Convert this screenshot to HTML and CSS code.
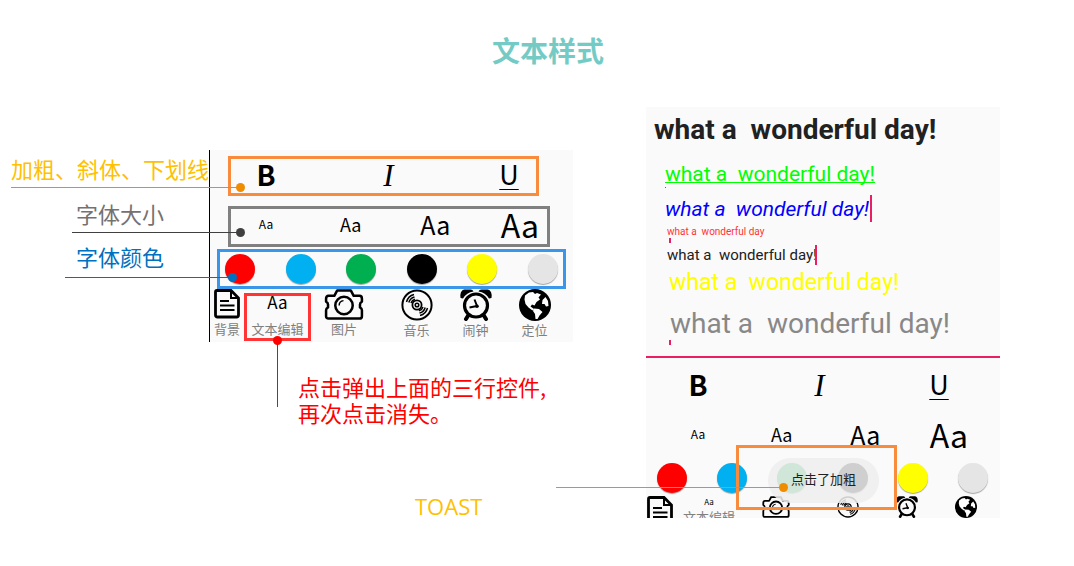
FILE: index.html
```html
<!DOCTYPE html>
<html lang="zh-CN">
<head>
<meta charset="utf-8">
<meta name="viewport" content="width=device-width, initial-scale=1">
<title>文本样式</title>
<link rel="stylesheet" href="styles.css">
</head>
<body>
<svg class="sprite" aria-hidden="true">
  <symbol id="doc" viewBox="0 0 26 30">
    <path d="M3 1.500H17L24.500 9V26Q24.500 28 22.500 28H3.500Q1.500 28 1.500 26V3Q1.500 1.500 3 1.500Z" fill="none" stroke="#000" stroke-width="2.800"/>
    <path d="M17 2V9H24" fill="none" stroke="#000" stroke-width="2"/>
    <path d="M6 12H15M6 16.500H20.500M6 21H20.500" stroke="#000" stroke-width="2"/>
  </symbol>
  <symbol id="camera" viewBox="0 0 40 32">
    <path d="M4 7H10L13 1.500H27L30 7H36Q38.500 7 38.500 10V13Q36.500 14 36.500 16V19Q38.500 20 38.500 22V28Q38.500 30.500 36 30.500H4Q1.500 30.500 1.500 28V22Q1.500 20 3.500 19V16Q3.500 14 1.500 13V10Q1.500 7 4 7Z" fill="none" stroke="#000" stroke-width="2.600" stroke-linejoin="round"/>
    <circle cx="20" cy="17" r="9" fill="none" stroke="#000" stroke-width="2.600"/>
    <path d="M15 17Q15 12.500 19.500 12" fill="none" stroke="#000" stroke-width="1.500"/>
  </symbol>
  <symbol id="disc" viewBox="0 0 32 32">
    <g fill="none" stroke="#000">
      <circle cx="16" cy="16" r="14.600" stroke-width="2"/>
      <circle cx="16" cy="16" r="4.600" stroke-width="1.800"/>
      <circle cx="16" cy="16" r="1.800" stroke-width="1.500"/>
      <path d="M5.500 13Q7 7 13 5.500M7.800 13.500Q9 9 13.500 7.900M10 14Q11 11 14 10.200M26.500 19Q25 25 19 26.500M24.200 18.500Q23 23 18.500 24.100M22 18Q21 21 18 21.800" stroke-width="1.500"/>
    </g>
  </symbol>
  <symbol id="clock" viewBox="0 0 32 32">
    <path d="M.5 9Q-.5 2 4 .5H11Q13 1 13.500 2.500Q6.500 3.500 3 9.500ZM31.500 9Q32.500 2 28 .5H21Q19 1 18.500 2.500Q25.500 3.500 29 9.500Z"/>
    <circle cx="16" cy="16.500" r="11.500" fill="none" stroke="#000" stroke-width="3.200"/>
    <path d="M8.500 26L6 30M23.500 26L26 30" stroke="#000" stroke-width="4" stroke-linecap="round"/>
    <path d="M14.500 10.500L17 17L9.500 18.500" fill="none" stroke="#000" stroke-width="2"/>
    <circle cx="17" cy="17.300" r="1.800"/>
  </symbol>
  <symbol id="globe" viewBox="0 0 32 32">
    <circle cx="16" cy="16" r="16"/>
    <path d="M6 6.500L10 3.500L14 3L16 5L18 4L22 5.500L19.500 8.500L21 10.500L17.500 13L15.500 16.500L13 15.500L11.500 17.500L15 20L13.500 21.500L9.500 18.500L6.500 15L5.500 10.500ZM15 19.500L20 20L23.500 23L20.500 26.500L18.500 30L16.500 30L16 25L14 22ZM23.500 11L26.500 8L29 12L29.500 17L27 17.500L25.500 15L23 15Z" fill="#fff"/>
  </symbol>
</svg>

<header class="header"><h1 class="title">文本样式</h1></header>

<main class="board">
  <ul class="labels">
    <li class="label label-style">加粗、斜体、下划线</li>
    <li class="label label-size">字体大小</li>
    <li class="label label-color">字体颜色</li>
  </ul>

  <section class="middle">
    <div class="panel">
      <div class="row frame frame-style">
        <button class="tool bold">B</button>
        <button class="tool italic">I</button>
        <button class="tool underline">U</button>
      </div>
      <div class="row frame frame-size">
        <button class="tool size-s">Aa</button>
        <button class="tool size-m">Aa</button>
        <button class="tool size-l">Aa</button>
        <button class="tool size-xl">Aa</button>
      </div>
      <div class="row frame frame-color">
        <button class="swatch red" aria-label="红色"></button>
        <button class="swatch blue" aria-label="蓝色"></button>
        <button class="swatch green" aria-label="绿色"></button>
        <button class="swatch black" aria-label="黑色"></button>
        <button class="swatch yellow" aria-label="黄色"></button>
        <button class="swatch gray" aria-label="灰色"></button>
      </div>
      <nav class="tabs">
        <button class="tab tab-doc"><svg class="icon-doc"><use href="#doc"/></svg>背景</button>
        <button class="tab tab-text"><span class="text-icon">Aa</span>文本编辑</button>
        <button class="tab tab-camera"><svg class="icon-camera"><use href="#camera"/></svg>图片</button>
        <button class="tab tab-plain"><svg class="icon-round"><use href="#disc"/></svg>音乐</button>
        <button class="tab tab-plain"><svg class="icon-round"><use href="#clock"/></svg>闹钟</button>
        <button class="tab tab-plain"><svg class="icon-round"><use href="#globe"/></svg>定位</button>
      </nav>
    </div>
    <p class="note">点击弹出上面的三行控件,<br>再次点击消失。</p>
    <p class="toast-label">TOAST</p>
  </section>

  <section class="phone">
    <div class="editor">
      <p class="line line-bold">what a  wonderful day!</p>
      <p class="line line-green">what a  wonderful day!</p>
      <p class="line line-blue">what a  wonderful day!</p>
      <p class="line line-red">what a  wonderful day</p>
      <p class="line line-black">what a  wonderful day!</p>
      <p class="line line-yellow">what a  wonderful day!</p>
      <p class="line line-gray">what a  wonderful day!</p>
    </div>
    <div class="row phone-style">
      <button class="tool bold">B</button>
      <button class="tool italic">I</button>
      <button class="tool underline">U</button>
    </div>
    <div class="row phone-size">
      <button class="tool size-s">Aa</button>
      <button class="tool size-m">Aa</button>
      <button class="tool size-l">Aa</button>
      <button class="tool size-xl">Aa</button>
    </div>
    <div class="row phone-color">
      <button class="swatch red" aria-label="红色"></button>
      <button class="swatch blue" aria-label="蓝色"></button>
      <button class="swatch green" aria-label="绿色"></button>
      <button class="swatch black" aria-label="黑色"></button>
      <button class="swatch yellow" aria-label="黄色"></button>
      <button class="swatch gray" aria-label="灰色"></button>
    </div>
    <nav class="phone-tabs">
      <button class="tab" aria-label="背景"><svg class="icon-doc"><use href="#doc"/></svg></button>
      <button class="tab phone-text"><span class="text-icon-small">Aa</span>文本编辑</button>
      <button class="tab phone-camera" aria-label="图片"><svg class="icon-camera-small"><use href="#camera"/></svg></button>
      <button class="tab phone-disc" aria-label="音乐"><svg class="icon-small"><use href="#disc"/></svg></button>
      <button class="tab phone-round" aria-label="闹钟"><svg class="icon-small"><use href="#clock"/></svg></button>
      <button class="tab phone-round" aria-label="定位"><svg class="icon-small"><use href="#globe"/></svg></button>
    </nav>
    <div class="callout"><div class="toast" role="status">点击了加粗</div></div>
  </section>
</main>
</body>
</html>
```
FILE: styles.css
```css
* { box-sizing: border-box; }

body {
  margin: 0;
  background: #fff;
  color: #000;
  font-family: "Noto Sans CJK SC", sans-serif;
}

h1, p, ul { margin: 0; padding: 0; }
ul { list-style: none; }
button { margin: 0; padding: 0; border: 0; background: none; color: inherit; font: inherit; }
svg { display: block; flex: none; }
.sprite { position: absolute; width: 0; height: 0; }

.header { padding: 30px 0 37px 22px; text-align: center; }
.title { color: #74cbc5; font-size: 28px; line-height: 40px; font-weight: 700; }

.board {
  display: grid;
  grid-template-columns: 209fr 364fr 73fr 354fr 74fr;
  align-items: start;
}

/* Labels with leader lines that reach into the panel */
.labels { position: relative; z-index: 1; display: grid; gap: 14px; padding-top: 50px; }
.label {
  position: relative;
  height: 31px;
  margin-right: -31px;
  border-bottom: 1px solid;
  font-size: 22px;
  line-height: 22px;
  white-space: nowrap;
}
.label::after {
  content: "";
  position: absolute;
  right: -5px;
  bottom: -5px;
  width: 9px;
  height: 9px;
  border-radius: 50%;
  background: #f08c00;
}
.label-style { margin-left: 11px; border-color: #f08c00; color: #ffc000; }
.label-size { margin-left: 72px; padding-left: 4px; border-color: #404040; color: #767171; }
.label-size::after { background: #404040; }
.label-color { margin-left: 65px; margin-right: -23px; padding-left: 11px; border-color: #0070c0; color: #0070c0; line-height: 18px; }
.label-color::after { background: #0070c0; }

/* Toolbar panel */
.middle { padding-top: 43px; }
.panel { padding-top: 6px; border-left: 1px solid #000; background: #fafafa; }
.row { display: flex; align-items: center; justify-content: space-between; }
.frame { border: 3px solid; }
.frame-style { height: 40px; margin: 0 34px 10px 18px; padding: 0 7px 0 15px; border-color: #f98b3c; }
.frame-size { height: 41px; margin: 0 23px 2px 18px; padding: 0 7px 0 15px; border-color: #808080; }
.frame-color { height: 40px; margin: 0 7px 0 7px; padding: 0 5px; border-color: #3a96e8; }

.tool { width: 40px; padding-bottom: 5px; line-height: 32px; text-align: center; white-space: nowrap; }
.bold { font-size: 28px; font-weight: 700; }
.italic { padding: 0 0 0 2px; font-family: "Liberation Serif", serif; font-size: 31px; font-style: italic; }
.underline { font-size: 27px; text-decoration: underline; text-decoration-thickness: 1px; text-underline-offset: 4px; }
.size-s { font-size: 12px; }
.size-m { font-size: 18px; }
.size-l { font-size: 25px; }
.size-xl { font-size: 32px; }

.swatch { width: 30px; height: 30px; border-radius: 50%; box-shadow: 0 1px 1px rgba(0, 0, 0, .35); }
.red { background: #f00; }
.blue { background: #00b0f0; }
.green { background: #00b050; }
.black { background: #000; }
.yellow { background: #ff0; }
.gray { background: #e5e5e5; }

.tabs { display: flex; align-items: flex-start; height: 53px; }
.tab {
  display: flex;
  flex-direction: column;
  align-items: center;
  color: #808080;
  font-size: 13px;
  line-height: 18px;
  white-space: nowrap;
}
.tabs .tab { height: 53px; justify-content: space-between; padding-bottom: 4px; }
.tabs .tab-doc { width: 34px; }
.tabs .tab-text { width: 67px; height: 48px; margin-top: 4px; padding: 0; border: 3px solid #ff3535; position: relative; }
.tab-text::before, .tab-text::after { content: ""; position: absolute; background: #f00; }
.tab-text::before { top: 44px; left: 30px; width: 1px; height: 67px; }
.tab-text::after { top: 40px; left: 26px; width: 9px; height: 9px; border-radius: 50%; }
.tabs .tab-camera { width: 66px; margin-right: 10px; }
.tabs .tab-plain { width: 59px; }
.text-icon { color: #000; font-size: 17px; line-height: 12px; }
.icon-doc { width: 26px; height: 30px; }
.icon-camera { width: 40px; height: 31px; }
.icon-round { width: 34px; height: 32px; }

.note { margin: 31px 0 0 89px; color: #f00; font-size: 22px; line-height: 26px; white-space: nowrap; }
.toast-label { margin: 66px 0 0 206px; color: #ffc000; font-family: "Open Sans", sans-serif; font-size: 22px; line-height: 30px; }

/* Phone preview */
.phone { grid-column: 4; position: relative; background: #fafafa; }
.editor { padding: 6px 0 14px; border-bottom: 2px solid #e91e63; font-family: Roboto, sans-serif; }
.line { position: relative; width: max-content; white-space: pre; }
.line-bold { margin-left: 8px; color: #212121; font-size: 28px; line-height: 34px; font-weight: 700; }
.line-green {
  margin: 13px 0 0 19px;
  color: #0f0;
  font-size: 21px;
  line-height: 28px;
  text-decoration: underline;
  text-decoration-thickness: 1px;
  text-decoration-skip-ink: none;
}
.line-blue { margin: 7px 0 0 19px; color: #00f; font-size: 21px; line-height: 28px; font-style: italic; }
.line-red { margin: 2px 0 0 21px; color: #f33; font-size: 10px; line-height: 14px; }
.line-black { margin: 6px 0 0 21px; color: #212121; font-size: 15px; line-height: 20px; }
.line-yellow { margin: 4px 0 0 23px; color: #ff0; font-size: 23px; line-height: 28px; }
.line-gray { margin: 9px 0 0 24px; color: #888; font-size: 28px; line-height: 36px; }
.line-blue::after, .line-black::after, .line-green::after, .line-red::after, .line-gray::after {
  content: "";
  position: absolute;
  width: 2px;
  background: #e91e63;
}
.line-blue::after { right: -3px; top: 0; height: 27px; }
.line-black::after { right: 0; top: 0; height: 20px; }
.line-green::after { left: 0; bottom: 0; width: 1px; height: 1px; }
.line-red::after { left: 2px; bottom: -4px; height: 5px; }
.line-gray::after { left: -1px; bottom: -3px; height: 5px; }

.phone-style { height: 56px; padding: 0 41px 0 32px; }
.phone-size { height: 45px; padding: 0 31px 0 32px; }
.phone-color { height: 37px; padding: 0 12px 0 11px; }
.phone-tabs { display: flex; align-items: flex-start; height: 22px; padding-left: 1px; overflow: hidden; }
.phone-text { margin-left: 10px; }
.phone-camera { margin-left: 27px; }
.phone-disc { margin-left: 46px; }
.phone-round { margin-left: 35px; }
.text-icon-small { color: #000; font-size: 8px; line-height: 12px; }
.icon-camera-small { width: 28px; height: 22px; }
.icon-small { width: 24px; height: 22px; }

.callout {
  position: absolute;
  left: 90px;
  bottom: 8px;
  width: 161px;
  height: 65px;
  padding: 10px 15px 0 29px;
  border: 3px solid #f98b3c;
}
.toast {
  height: 45px;
  border-radius: 23px;
  background: rgba(238, 238, 238, .87);
  font-size: 13px;
  line-height: 42px;
  text-align: center;
  color: #212121;
}
.callout::before, .callout::after { content: ""; position: absolute; background: #f08c00; }
.callout::before { right: 110px; top: 39px; width: 228px; height: 1px; }
.callout::after { right: 106px; top: 35px; width: 9px; height: 9px; border-radius: 50%; }
```
